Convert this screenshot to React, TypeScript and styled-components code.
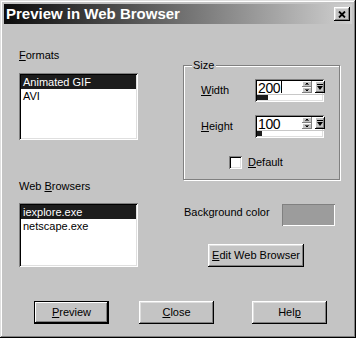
import React from 'react';
import styled, {createGlobalStyle, css} from 'styled-components';

const GlobalStyle = createGlobalStyle`
    html, body {
        margin: 0;
        padding: 0;
        background: #c4c4c4;
    }
    body {
        font-family: "Liberation Sans", Arial, sans-serif;
        font-size: 11px;
        color: #000;
    }
    * {
        box-sizing: border-box;
    }
`;

const raised = css`
    box-shadow: inset -1px -1px 0 #000, inset 1px 1px 0 #fff, inset -2px -2px 0 #808080, inset 2px 2px 0 #dfdfdf;
`;

const sunken = css`
    box-shadow: inset 1px 1px 0 #808080, inset -1px -1px 0 #fff, inset 2px 2px 0 #000, inset -2px -2px 0 #dfdfdf;
`;

const Window = styled.div`
    width: 356px;
    height: 338px;
    padding: 4px;
    background: #c4c4c4;
    box-shadow: inset -1px -1px 0 #000, inset 1px 1px 0 #dfdfdf, inset -2px -2px 0 #808080, inset 2px 2px 0 #fff;
    display: flex;
    flex-direction: column;
`;

const TitleBar = styled.div`
    height: 20px;
    display: flex;
    align-items: center;
    justify-content: space-between;
    padding: 0 2px 0 2px;
    background: linear-gradient(to right, #0c0c0c, #d0d0d0);
`;

const Title = styled.span`
    color: #fff;
    font-weight: bold;
    font-size: 15px;
    line-height: 20px;
`;

const CloseBtn = styled.div`
    width: 16px;
    height: 14px;
    background: #c4c4c4;
    ${raised};
    display: flex;
    align-items: center;
    justify-content: center;
`;

const Main = styled.div`
    display: grid;
    grid-template-columns: 119px 157px;
    column-gap: 45px;
    padding-left: 15px;
`;

const Column = styled.div`
    display: flex;
    flex-direction: column;
`;

const Label = styled.div<{$top: number}>`
    margin-top: ${(p) => p.$top}px;
    line-height: 13px;
`;

const U = styled.span`
    text-decoration: underline;
    text-underline-offset: 1px;
`;

const ListBox = styled.div<{$top: number; $height: number}>`
    margin-top: ${(p) => p.$top}px;
    width: 119px;
    height: ${(p) => p.$height}px;
    background: #fff;
    padding: 2px;
    ${sunken};
`;

const ListItem = styled.div<{$selected?: boolean}>`
    height: 14px;
    line-height: 14px;
    padding-left: 2px;
    white-space: nowrap;
    background: ${(p) => (p.$selected ? '#1c1c1c' : 'transparent')};
    color: ${(p) => (p.$selected ? '#fff' : '#000')};
`;

const GroupBox = styled.div`
    margin-top: 41px;
    height: 115px;
    border: 1px solid #808080;
    box-shadow: inset 1px 1px 0 #fff, 1px 1px 0 #fff;
    display: flex;
    flex-direction: column;
`;

const Legend = styled.div`
    align-self: flex-start;
    margin: -7px 0 0 8px;
    padding: 0 2px 0 1px;
    background: #c4c4c4;
    line-height: 13px;
`;

const FieldRow = styled.div<{$top: number; $indent: number}>`
    display: flex;
    align-items: center;
    margin-top: ${(p) => p.$top}px;
    padding-left: ${(p) => p.$indent}px;
    line-height: 13px;
`;

const FieldName = styled.div`
    width: 54px;
`;

const SpinBox = styled.div`
    width: 69px;
    height: 23px;
    background: #fff;
    padding: 2px;
    ${sunken};
    display: grid;
    grid-template-columns: 42px 10px 10px;
    grid-template-rows: 13px 6px;
    column-gap: 3px;
`;

const SpinText = styled.div`
    font-size: 14px;
    line-height: 14px;
    letter-spacing: -0.4px;
    padding-left: 1px;
    white-space: nowrap;
    display: flex;
    align-items: flex-start;
`;

const Caret = styled.span`
    display: inline-block;
    width: 1px;
    height: 12px;
    margin-left: 1px;
    background: #000;
`;

const SpinButtons = styled.div`
    display: flex;
    flex-direction: column;
`;

const SpinBtn = styled.div`
    height: 6px;
    width: 10px;
    background: #c4c4c4;
    box-shadow: inset -1px -1px 0 #808080, inset 1px 1px 0 #fff;
    display: flex;
    align-items: center;
    justify-content: center;
`;

const DropBtn = styled.div`
    height: 12px;
    width: 10px;
    background: #c4c4c4;
    box-shadow: inset -1px -1px 0 #000, inset 1px 1px 0 #fff, inset -2px -2px 0 #808080;
    display: flex;
    align-items: center;
    justify-content: center;
`;

const Strip = styled.div`
    grid-column: 1 / -1;
    border-top: 1px solid #c8c8c8;
`;

const StripFill = styled.div`
    height: 5px;
    background: #1c1c1c;
`;

const CheckBox = styled.div`
    width: 13px;
    height: 13px;
    background: #fff;
    ${sunken};
    margin-right: 6px;
`;

const BgRow = styled.div`
    margin-top: 24px;
    padding-left: 1px;
    display: flex;
    align-items: flex-start;
`;

const BgLabel = styled.div`
    width: 98px;
    margin-top: 2px;
    line-height: 13px;
`;

const Swatch = styled.div`
    width: 53px;
    height: 22px;
    background: #9c9c9c;
    box-shadow: inset 1px 1px 0 #808080, inset -1px -1px 0 #fff;
`;

const Button = styled.div<{$width: number; $default?: boolean; $push?: boolean; $top?: number; $left?: number}>`
    width: ${(p) => p.$width}px;
    height: 23px;
    margin-top: ${(p) => p.$top || 0}px;
    margin-left: ${(p) => (p.$push ? 'auto' : `${p.$left || 0}px`)};
    background: #c4c4c4;
    display: flex;
    align-items: center;
    justify-content: center;
    line-height: 13px;
    ${(p) =>
        p.$default
            ? 'box-shadow: inset 0 0 0 1px #000, inset -2px -2px 0 #000, inset 2px 2px 0 #fff, inset -3px -3px 0 #808080;'
            : 'box-shadow: inset -1px -1px 0 #000, inset 1px 1px 0 #fff, inset -2px -2px 0 #808080, inset 2px 2px 0 #dfdfdf;'}
`;

const Footer = styled.div`
    margin-top: 34px;
    display: flex;
    gap: 30px;
    padding: 0 25px 0 30px;
`;

const UpArrow = () => (
    <svg width='4' height='2' viewBox='0 0 4 2'>
        <rect x='1' y='0' width='2' height='1' fill='#000' />
        <rect x='0' y='1' width='4' height='1' fill='#555' />
    </svg>
);

const DownArrow = () => (
    <svg width='4' height='2' viewBox='0 0 4 2'>
        <rect x='0' y='0' width='4' height='1' fill='#555' />
        <rect x='1' y='1' width='2' height='1' fill='#000' />
    </svg>
);

const DropGlyph = () => (
    <svg width='6' height='7' viewBox='0 0 6 7'>
        <rect x='0' y='0' width='6' height='1' fill='#000' />
        <polygon points='0,2 6,2 3,6' fill='#000' />
    </svg>
);

interface SpinProps {
    value: string;
    fill: number;
    caret?: boolean;
}

const Spin = ({value, fill, caret}: SpinProps) => (
    <SpinBox>
        <SpinText>
            {value}
            {caret && <Caret />}
        </SpinText>
        <SpinButtons>
            <SpinBtn><UpArrow /></SpinBtn>
            <SpinBtn><DownArrow /></SpinBtn>
        </SpinButtons>
        <DropBtn><DropGlyph /></DropBtn>
        <Strip>
            <StripFill style={{width: fill}} />
        </Strip>
    </SpinBox>
);

const App = () => {
    return (
        <>
            <GlobalStyle />
            <Window>
                <TitleBar>
                    <Title>{'Preview in Web Browser'}</Title>
                    <CloseBtn>
                        <svg width='8' height='7' viewBox='0 0 8 7'>
                            <path d='M1 0.5 L7 6.5 M7 0.5 L1 6.5' stroke='#000' strokeWidth='1.8' />
                        </svg>
                    </CloseBtn>
                </TitleBar>
                <Main>
                    <Column>
                        <Label $top={25}><U>{'F'}</U>{'ormats'}</Label>
                        <ListBox $top={11} $height={67}>
                            <ListItem $selected>{'Animated GIF'}</ListItem>
                            <ListItem>{'AVI'}</ListItem>
                        </ListBox>
                        <Label $top={40}>{'Web '}<U>{'B'}</U>{'rowsers'}</Label>
                        <ListBox $top={10} $height={64}>
                            <ListItem $selected>{'iexplore.exe'}</ListItem>
                            <ListItem>{'netscape.exe'}</ListItem>
                        </ListBox>
                    </Column>
                    <Column>
                        <GroupBox>
                            <Legend>{'Size'}</Legend>
                            <FieldRow $top={7} $indent={17}>
                                <FieldName><U>{'W'}</U>{'idth'}</FieldName>
                                <Spin value='200' fill={11} caret />
                            </FieldRow>
                            <FieldRow $top={13} $indent={17}>
                                <FieldName><U>{'H'}</U>{'eight'}</FieldName>
                                <Spin value='100' fill={5} />
                            </FieldRow>
                            <FieldRow $top={18} $indent={45}>
                                <CheckBox />
                                <span><U>{'D'}</U>{'efault'}</span>
                            </FieldRow>
                        </GroupBox>
                        <BgRow>
                            <BgLabel>{'Background color'}</BgLabel>
                            <Swatch />
                        </BgRow>
                        <Button $width={96} $top={18} $left={25}><U>{'E'}</U>{'dit Web Browser'}</Button>
                    </Column>
                </Main>
                <Footer>
                    <Button $width={75} $default><U>{'P'}</U>{'review'}</Button>
                    <Button $width={75}><U>{'C'}</U>{'lose'}</Button>
                    <Button $width={75} $push>{'Hel'}<U>{'p'}</U></Button>
                </Footer>
            </Window>
        </>
    );
};

export default App;
